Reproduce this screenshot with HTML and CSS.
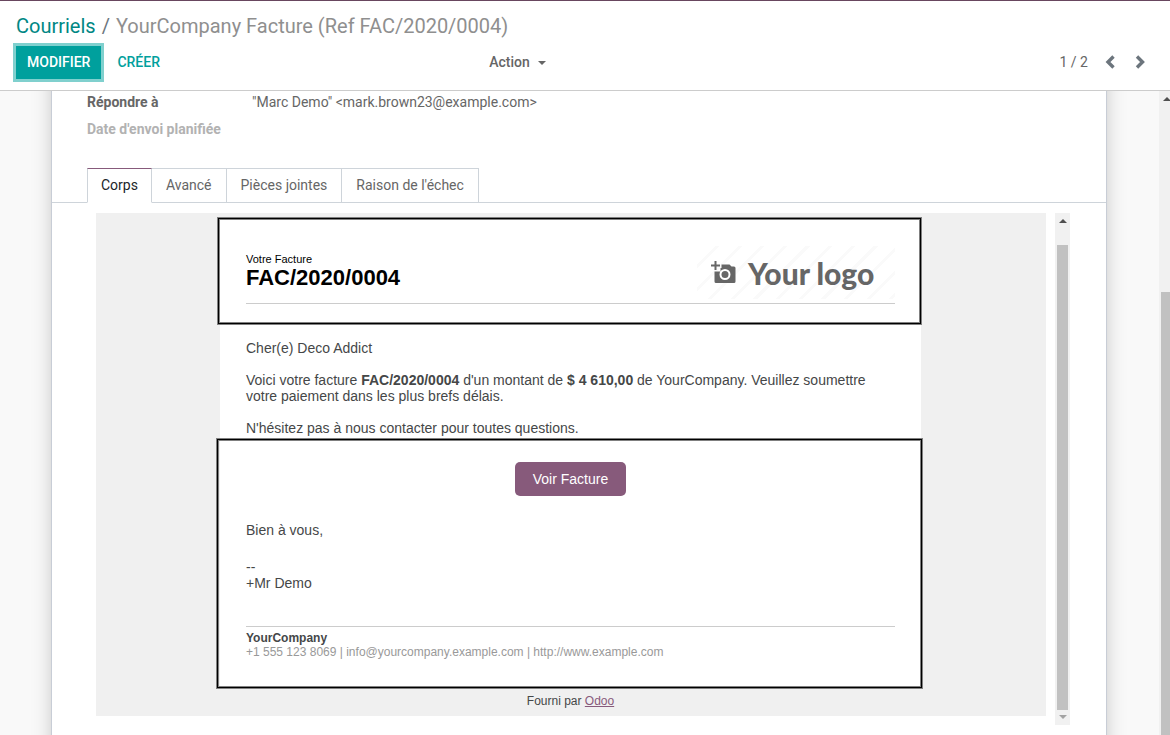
FILE: index.html
```html
<!DOCTYPE html>
<html lang="fr">
<head>
<meta charset="utf-8">
<title>YourCompany Facture (Ref FAC/2020/0004)</title>
<link rel="stylesheet" href="styles.css">
</head>
<body>
<header class="control-panel">
  <nav class="breadcrumb" aria-label="Fil d'Ariane">
    <a href="#">Courriels</a><span class="separator">/</span><span class="current">YourCompany Facture (Ref FAC/2020/0004)</span>
  </nav>
  <div class="toolbar">
    <div class="buttons">
      <button type="button" class="btn btn-primary">MODIFIER</button>
      <button type="button" class="btn btn-link">CRÉER</button>
    </div>
    <div class="toolbar-right">
      <button type="button" class="btn btn-action">Action <span class="caret"></span></button>
      <div class="pager">
        <span class="count">1 / 2</span>
        <button type="button" class="pager-btn" aria-label="Précédent"><svg width="10" height="14" viewBox="0 0 10 14"><path d="M8.500 1.500 3 7 8.500 12.500" fill="none" stroke="currentColor" stroke-width="3.400"/></svg></button>
        <button type="button" class="pager-btn" aria-label="Suivant"><svg width="10" height="14" viewBox="0 0 10 14"><path d="M2 1.500 7.500 7 2 12.500" fill="none" stroke="currentColor" stroke-width="3.400"/></svg></button>
      </div>
    </div>
  </div>
</header>

<div class="content">
  <main class="sheet-area">
    <div class="sheet">
      <dl class="fields">
        <dt>Répondre à</dt><dd>"Marc Demo" &lt;mark.brown23@example.com&gt;</dd>
        <dt class="empty">Date d'envoi planifiée</dt><dd></dd>
      </dl>
      <div class="tabs" role="tablist">
        <button type="button" role="tab" aria-selected="true" class="tab active">Corps</button>
        <button type="button" role="tab" aria-selected="false" class="tab">Avancé</button>
        <button type="button" role="tab" aria-selected="false" class="tab">Pièces jointes</button>
        <button type="button" role="tab" aria-selected="false" class="tab">Raison de l'échec</button>
      </div>
      <div class="frame">
        <div class="mail">
          <article class="card">
            <section class="mail-head outlined">
              <div class="head-row">
                <div class="title">
                  <div class="kicker">Votre Facture</div>
                  <div class="reference">FAC/2020/0004</div>
                </div>
                <div class="logo">
                  <svg width="26" height="24" viewBox="0 0 26 24" aria-hidden="true">
                    <path d="M4.500 0v9M0 4.500h9" stroke="#666" stroke-width="2"/>
                    <path fill="#666" fill-rule="evenodd" d="M10.500 3.500h8l2 2H23q1.500 0 1.500 1.500v13.500q0 1.500-1.500 1.500H5q-1.500 0-1.500-1.500V10.500h6V7h1zM14 8a5.500 5.500 0 1 0 0 11a5.500 5.500 0 1 0 0-11z"/>
                    <circle cx="14" cy="13.500" r="3.500" fill="#666"/>
                  </svg>
                  <span>Your logo</span>
                </div>
              </div>
            </section>
            <section class="mail-body">
              <p>Cher(e) Deco Addict</p>
              <p>Voici votre facture <strong>FAC/2020/0004</strong> d'un montant de <strong>$ 4&nbsp;610,00</strong> de YourCompany. Veuillez soumettre votre paiement dans les plus brefs délais.</p>
              <p>N'hésitez pas à nous contacter pour toutes questions.</p>
            </section>
            <section class="mail-foot outlined wide">
              <div class="cta"><a href="#" class="view-btn">Voir Facture</a></div>
              <p class="closing">Bien à vous,</p>
              <p class="signature">--<br>+Mr Demo</p>
              <footer class="company">
                <strong>YourCompany</strong>
                <div class="contact">+1 555 123 8069 | info@yourcompany.example.com | http://www.example.com</div>
              </footer>
            </section>
          </article>
          <p class="powered">Fourni par <a href="#">Odoo</a></p>
        </div>
        <div class="scroll inner-scroll" aria-hidden="true">
          <span class="arrow up"></span>
          <span class="thumb"></span>
          <span class="arrow down"></span>
        </div>
      </div>
    </div>
  </main>
  <div class="scroll page-scroll" aria-hidden="true">
    <span class="arrow up"></span>
    <span class="thumb"></span>
  </div>
</div>
</body>
</html>
```
FILE: styles.css
```css
* { box-sizing: border-box; }
body {
  margin: 0;
  height: 100vh;
  display: flex;
  flex-direction: column;
  overflow: hidden;
  background: #f9f9f9;
  color: #666;
  font: 14px/21px Roboto, sans-serif;
}
button { font: inherit; color: inherit; background: none; border: 0; padding: 0; }
p, dl, dd { margin: 0; }

.control-panel {
  flex: none;
  background: #fff;
  border-top: 1px solid #68465f;
  border-bottom: 1px solid #ccc;
  padding: 10px 16px 11px;
}
.breadcrumb { font-size: 20px; line-height: 30px; white-space: nowrap; }
.breadcrumb a { color: #008784; text-decoration: none; }
.separator { color: #6c757d; padding: 0 6px; }
.current { color: #8f8f8f; }
.toolbar { display: flex; padding-top: 5px; }
.buttons, .toolbar-right { flex: 1; display: flex; align-items: center; }
.toolbar-right { flex: 0 0 60%; justify-content: space-between; }
.btn { height: 33px; font-weight: 500; }
.btn-primary { background: #00a09d; color: #fff; padding: 0 11px; box-shadow: 0 0 0 3px #80d0ce; }
.btn-link { color: #00a09d; padding: 0 16px; }
.btn-action { display: flex; align-items: center; gap: 8px; padding: 0 18px; }
.caret { border: 4px solid transparent; border-top-color: #666; border-bottom: 0; }
.pager { display: flex; align-items: center; gap: 10px; padding-right: 4px; }
.count { padding-right: 2px; }
.pager-btn { width: 20px; height: 20px; color: #6c757d; display: flex; align-items: center; justify-content: center; }
.pager-btn svg { margin-bottom: 2px; }

.content { flex: 1; min-height: 0; display: flex; }
.sheet-area { flex: 1; min-width: 0; padding: 0 52px 0 51px; overflow: hidden; }
.sheet {
  min-height: 100%;
  margin: -32px 0;
  padding: 33px 0 40px;
  background: #fff;
  border: 1px solid #c8cdd6;
  border-width: 0 1px;
  box-shadow: 0 0 20px -3px rgba(0, 0, 0, 0.25);
}
.fields { display: grid; grid-template-columns: 165px 1fr; row-gap: 6px; padding: 0 35px 28px; }
.fields dt { font-weight: 700; }
.fields .empty { color: #b2b2b2; }

.tabs { display: flex; padding-left: 35px; border-bottom: 1px solid #ced4da; }
.tab {
  height: 35px;
  padding: 0 14px;
  border: 1px solid #ced4da;
  border-left-width: 0;
  margin-bottom: -1px;
}
.tab.active { padding: 0 13px; color: #212529; border-left-width: 1px; border-top-color: #875a7b; border-bottom-color: #fff; }

.frame { display: flex; gap: 9px; padding: 10px 36px 10px 44px; }
.mail {
  flex: 1;
  align-self: flex-start;
  background: #f0f0f0;
  color: #454748;
  padding: 6px 17px 8px 16px;
  font: 14px/16px "Liberation Sans", Arial, sans-serif;
}
.card { max-width: 701px; margin: 0 auto; background: #fff; }
.card section { padding: 0 26px; }
.outlined { position: relative; }
.outlined::after {
  content: "";
  position: absolute;
  inset: -1px 0 0 -2px;
  border: 1px solid #000;
  box-shadow: 0 0 0 1px #808080, inset 0 0 0 1px #808080;
  pointer-events: none;
}
.wide::after { inset: -1px -1px 0 -3px; }
.mail-head { height: 105px; }
.mail .mail-head { padding-top: 27px; }
.head-row { display: flex; justify-content: space-between; align-items: flex-start; height: 58px; border-bottom: 1px solid #ccc; }
.title { padding-top: 7px; }
.kicker { font-size: 11px; line-height: 12px; color: #000; }
.reference { font-size: 22px; line-height: 25px; font-weight: 700; color: #000; }
.logo {
  display: flex;
  align-items: center;
  gap: 11px;
  width: 198px;
  height: 53px;
  padding-left: 14px;
  background: repeating-linear-gradient(135deg, #fff 0 13px, #fafafa 13px 16px);
  color: #666;
  font: 900 30px/34px Lato, sans-serif;
  white-space: nowrap;
}
.mail .mail-body { display: grid; gap: 16px; padding-top: 16px; padding-bottom: 4px; }
.mail .mail-foot { padding-top: 22px; padding-bottom: 29px; }
.cta { text-align: center; }
.view-btn { display: inline-block; background: #875a7b; color: #fff; text-decoration: none; border-radius: 5px; padding: 9px 18px; }
.closing { padding-top: 26px; }
.signature { padding: 21px 0 35px; }
.company { border-top: 1px solid #ccc; padding-top: 4px; font-size: 12px; line-height: 14px; }
.contact { color: #999; }
.powered { padding-top: 6px; font-size: 12px; line-height: 14px; text-align: center; }
.powered a { color: #875a7b; }

.scroll { flex: none; display: flex; flex-direction: column; align-items: center; width: 15px; background: #f1f1f1; }
.arrow { flex: none; border: 4px solid transparent; }
.arrow.up { border-top: 0; border-bottom-color: #505050; margin: 6px 0; }
.arrow.down { border-bottom: 0; border-top-color: #a3a3a3; margin: 5px 0 6px; }
.thumb { flex: 1; width: 11px; background: #c1c1c1; margin-top: 16px; }
.inner-scroll { min-height: 512px; }
.page-scroll { margin-right: -4px; }
.page-scroll .thumb { margin-top: 185px; }
```
